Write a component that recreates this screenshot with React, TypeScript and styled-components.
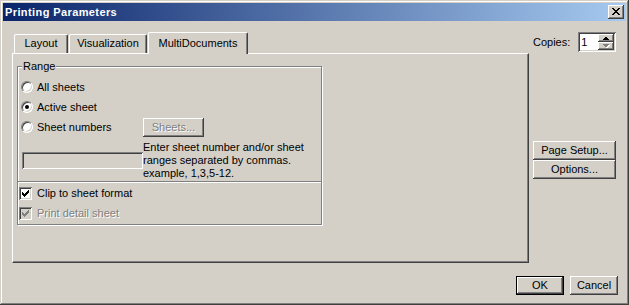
import React from "react";
import styled, { createGlobalStyle, css } from "styled-components";

const FACE = "#D4D0C8";
const LIGHT = "#FFFFFF";
const SHADOW = "#808080";
const DARK = "#404040";

const Global = createGlobalStyle`
  html, body { margin: 0; padding: 0; background: ${FACE}; }
  body {
    font-family: "Liberation Sans", Arial, sans-serif;
    font-size: 11px;
    color: #000;
  }
  * { box-sizing: border-box; }
`;

const raised = css`
  box-shadow: inset -1px -1px 0 ${DARK}, inset 1px 1px 0 ${LIGHT},
    inset -2px -2px 0 ${SHADOW}, inset 2px 2px 0 ${FACE};
`;

const sunken = css`
  box-shadow: inset 1px 1px 0 ${SHADOW}, inset -1px -1px 0 ${LIGHT},
    inset 2px 2px 0 ${DARK}, inset -2px -2px 0 ${FACE};
`;

const disabledText = css`
  color: ${SHADOW};
  text-shadow: 1px 1px 0 ${LIGHT};
`;

const Window = styled.div`
  width: 629px;
  height: 305px;
  padding: 3px;
  background: ${FACE};
  box-shadow: inset -1px -1px 0 ${DARK}, inset 1px 1px 0 ${FACE},
    inset -2px -2px 0 ${SHADOW}, inset 2px 2px 0 ${LIGHT};
  display: flex;
  flex-direction: column;
`;

const TitleBar = styled.div`
  height: 18px;
  flex: none;
  display: flex;
  align-items: center;
  padding: 0 2px 0 2px;
  background: linear-gradient(to right, #0a246a, #a6caf0);
`;

const Title = styled.div`
  flex: 1;
  color: #fff;
  font-weight: bold;
  font-size: 11px;
  letter-spacing: 0.4px;
  line-height: 13px;
`;

const CloseButton = styled.div`
  width: 16px;
  height: 14px;
  background: ${FACE};
  ${raised};
  display: flex;
  align-items: center;
  justify-content: center;
  padding-bottom: 1px;
`;

const Body = styled.div`
  flex: 1;
  display: flex;
  flex-direction: column;
  padding: 11px 8px 0 9px;
`;

const MainRow = styled.div`
  display: flex;
  align-items: flex-start;
`;

const TabArea = styled.div`
  width: 517px;
  display: flex;
  flex-direction: column;
`;

const TabStrip = styled.div`
  height: 21px;
  display: flex;
  align-items: flex-end;
  padding-left: 2px;
`;

const Tab = styled.div<{ $w: number; $active?: boolean; $ml?: number }>`
  width: ${(p) => p.$w}px;
  margin-left: ${(p) => p.$ml ?? 0}px;
  height: ${(p) => (p.$active ? 22 : 19)}px;
  margin-bottom: ${(p) => (p.$active ? -1 : 0)}px;
  position: relative;
  z-index: ${(p) => (p.$active ? 1 : 0)};
  background: ${FACE};
  border-top: 1px solid ${LIGHT};
  border-left: 1px solid ${LIGHT};
  border-right: 1px solid ${DARK};
  border-radius: 2px 2px 0 0;
  box-shadow: inset -1px 0 0 ${SHADOW};
  display: flex;
  justify-content: center;
  align-items: flex-start;
  padding-top: ${(p) => (p.$active ? 4 : 2)}px;
  line-height: 13px;
  white-space: nowrap;
`;

const Panel = styled.div`
  width: 517px;
  height: 210px;
  border-top: 1px solid ${LIGHT};
  border-left: 1px solid ${LIGHT};
  border-right: 1px solid ${DARK};
  border-bottom: 1px solid ${DARK};
  box-shadow: inset -1px -1px 0 ${SHADOW};
  padding: 12px 0 0 4px;
`;

const GroupBox = styled.div`
  width: 305px;
  height: 159px;
  border: 1px solid ${SHADOW};
  box-shadow: 1px 1px 0 ${LIGHT}, inset 1px 1px 0 ${LIGHT};
  display: flex;
  flex-direction: column;
`;

const GroupLabel = styled.div`
  align-self: flex-start;
  margin: -7px 0 0 4px;
  padding: 0 1px;
  line-height: 13px;
  background: ${FACE};
`;

const OptionGrid = styled.div`
  margin-top: 4px;
  padding-left: 3px;
  display: grid;
  grid-template-columns: 122px 1fr;
`;

const OptionRow = styled.label<{ $span?: boolean; $indent?: number }>`
  height: 20px;
  display: flex;
  align-items: center;
  gap: 4px;
  padding-left: ${(p) => p.$indent ?? 0}px;
  line-height: 13px;
  white-space: nowrap;
  ${(p) => p.$span && "grid-column: 1 / -1;"}
`;

const RadioCircle = styled.span`
  width: 12px;
  height: 12px;
  flex: none;
  border-radius: 50%;
  background: #fff;
  border: 1px solid;
  border-color: ${SHADOW} ${LIGHT} ${LIGHT} ${SHADOW};
  box-shadow: inset 1px 1px 0 ${DARK}, inset -1px -1px 0 ${FACE};
  display: flex;
  align-items: center;
  justify-content: center;
`;

const RadioDot = styled.span`
  width: 4px;
  height: 4px;
  border-radius: 50%;
  background: #000;
`;

const PushButton = styled.div<{ $w?: number; $default?: boolean; $disabled?: boolean }>`
  width: ${(p) => (p.$w ? `${p.$w}px` : "100%")};
  height: 19px;
  flex: none;
  background: ${FACE};
  ${raised};
  ${(p) => p.$default && "border: 1px solid #000;"}
  display: flex;
  align-items: center;
  justify-content: center;
  line-height: 13px;
  white-space: nowrap;
  ${(p) => p.$disabled && disabledText}
`;

const SheetsCell = styled.div`
  display: flex;
  align-items: center;
`;

const SheetField = styled.div`
  width: 121px;
  height: 17px;
  margin: 15px 0 0 1px;
  background: ${FACE};
  ${sunken};
`;

const HelpText = styled.div`
  margin-top: 4px;
  line-height: 13px;
  white-space: nowrap;
`;

const Separator = styled.div`
  margin-top: 1px;
  height: 2px;
  border-top: 1px solid ${SHADOW};
  border-bottom: 1px solid ${LIGHT};
`;

const CheckBox = styled.span<{ $disabled?: boolean }>`
  width: 13px;
  height: 13px;
  flex: none;
  background: ${(p) => (p.$disabled ? FACE : "#fff")};
  ${sunken};
  display: flex;
  align-items: center;
  justify-content: center;
`;

const CheckLabel = styled.span<{ $disabled?: boolean }>`
  margin-left: 1px;
  ${(p) => p.$disabled && disabledText}
`;

const SideColumn = styled.div`
  width: 83px;
  margin-left: 4px;
  display: flex;
  flex-direction: column;
`;

const CopiesRow = styled.div`
  height: 20px;
  display: flex;
  align-items: center;
  justify-content: flex-end;
  gap: 8px;
  white-space: nowrap;
`;

const SpinBox = styled.div`
  width: 44px;
  height: 20px;
  background: #fff;
  ${sunken};
  padding: 2px;
  display: flex;
`;

const SpinValue = styled.div`
  flex: 1;
  padding-left: 1px;
  line-height: 16px;
`;

const SpinButtons = styled.div`
  width: 16px;
  display: flex;
  flex-direction: column;
`;

const SpinButton = styled.div`
  flex: 1;
  background: ${FACE};
  ${raised};
  display: flex;
  align-items: center;
  justify-content: center;
`;

const SideButtons = styled.div`
  margin-top: 89px;
  display: flex;
  flex-direction: column;
`;

const Footer = styled.div`
  margin-top: 13px;
  display: flex;
  justify-content: flex-end;
  gap: 6px;
`;

const CloseGlyph = () => {
  const rows = [
    "xx....xx",
    ".xx..xx.",
    "..xxxx..",
    "...xx...",
    "..xxxx..",
    ".xx..xx.",
    "xx....xx",
  ];
  return (
    <svg width="8" height="7" viewBox="0 0 8 7" shapeRendering="crispEdges">
      {rows.flatMap((r, y) =>
        r.split("").map((c, x) =>
          c === "x" ? <rect key={`${x}-${y}`} x={x} y={y} width="1" height="1" fill="#000" /> : null
        )
      )}
    </svg>
  );
};

const CheckMark = ({ color }: { color: string }) => (
  <svg width="7" height="7" viewBox="0 0 7 7" shapeRendering="crispEdges">
    <polygon points="0,2 2,4 7,-1 7,2 2,7 0,5" fill={color} />
  </svg>
);

const Arrow = ({ up, disabled }: { up?: boolean; disabled?: boolean }) => {
  const pts = up ? "0,4 3.5,0.5 7,4" : "0,0 3.5,3.5 7,0";
  return (
    <svg width="8" height="5" viewBox="0 0 8 5" shapeRendering="crispEdges">
      {disabled && <polygon points={pts} fill="#fff" transform="translate(1,1)" />}
      <polygon points={pts} fill={disabled ? SHADOW : "#000"} />
    </svg>
  );
};

const Radio = ({ checked }: { checked?: boolean }) => (
  <RadioCircle>{checked && <RadioDot />}</RadioCircle>
);

export default function App() {
  return (
    <>
      <Global />
      <Window>
        <TitleBar>
          <Title>Printing Parameters</Title>
          <CloseButton>
            <CloseGlyph />
          </CloseButton>
        </TitleBar>
        <Body>
          <MainRow>
            <TabArea>
              <TabStrip>
                <Tab $w={54}>Layout</Tab>
                <Tab $w={78} $ml={1}>Visualization</Tab>
                <Tab $w={100} $ml={1} $active>
                  MultiDocuments
                </Tab>
              </TabStrip>
              <Panel>
                <GroupBox>
                  <GroupLabel>Range</GroupLabel>
                  <OptionGrid>
                    <OptionRow $span>
                      <Radio />
                      All sheets
                    </OptionRow>
                    <OptionRow $span>
                      <Radio checked />
                      Active sheet
                    </OptionRow>
                    <OptionRow>
                      <Radio />
                      Sheet numbers
                    </OptionRow>
                    <SheetsCell>
                      <PushButton $w={61} $disabled>
                        Sheets...
                      </PushButton>
                    </SheetsCell>
                    <div>
                      <SheetField />
                    </div>
                    <HelpText>
                      Enter sheet number and/or sheet
                      <br />
                      ranges separated by commas.
                      <br />
                      example, 1,3,5-12.
                    </HelpText>
                  </OptionGrid>
                  <Separator />
                  <OptionRow $indent={1}>
                    <CheckBox>
                      <CheckMark color="#000" />
                    </CheckBox>
                    <CheckLabel>Clip to sheet format</CheckLabel>
                  </OptionRow>
                  <OptionRow $indent={1}>
                    <CheckBox $disabled>
                      <CheckMark color={SHADOW} />
                    </CheckBox>
                    <CheckLabel $disabled>Print detail sheet</CheckLabel>
                  </OptionRow>
                </GroupBox>
              </Panel>
            </TabArea>
            <SideColumn>
              <CopiesRow>
                <span>Copies:</span>
                <SpinBox>
                  <SpinValue>1</SpinValue>
                  <SpinButtons>
                    <SpinButton>
                      <Arrow up />
                    </SpinButton>
                    <SpinButton>
                      <Arrow disabled />
                    </SpinButton>
                  </SpinButtons>
                </SpinBox>
              </CopiesRow>
              <SideButtons>
                <PushButton>Page Setup...</PushButton>
                <PushButton>Options...</PushButton>
              </SideButtons>
            </SideColumn>
          </MainRow>
          <Footer>
            <PushButton $w={48} $default>
              OK
            </PushButton>
            <PushButton $w={48}>Cancel</PushButton>
          </Footer>
        </Body>
      </Window>
    </>
  );
}
